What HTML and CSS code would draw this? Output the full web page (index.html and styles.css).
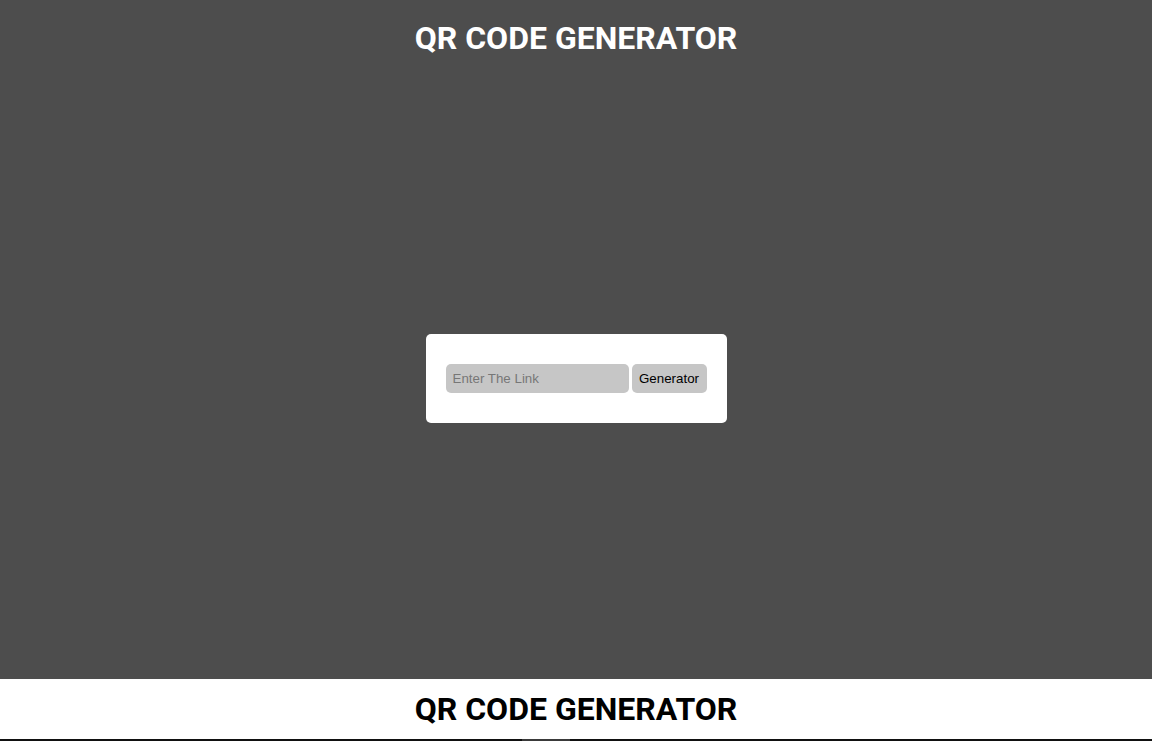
FILE: index.html
```html
<!DOCTYPE html>
<html>
<head>
<meta charset="utf-8">
<link rel="stylesheet" href="styles.css">
</head>
<body>
<main class="hero">
  <h1 class="title">QR CODE GENERATOR</h1>
  <div class="center">
    <div class="card">
      <input class="link-input" type="text" placeholder="Enter The Link">
      <button class="gen-btn">Generator</button>
    </div>
  </div>
</main>
<footer class="footer">
  <h2 class="footer-title">QR CODE GENERATOR</h2>
</footer>
<div class="bottom-bar"><span class="bar-thumb"></span></div>
</body>
</html>
```

FILE: styles.css
```css
* { box-sizing: border-box; }
html, body { margin: 0; padding: 0; }
body {
  background: #fff;
  font-family: Roboto, "Liberation Sans", sans-serif;
  overflow: hidden;
}
.hero {
  background: #4d4d4d;
  height: 679px;
  display: flex;
  flex-direction: column;
  align-items: center;
}
.title {
  margin: 0;
  padding-top: 18px;
  color: #fff;
  font-family: Roboto, sans-serif;
  font-weight: 700;
  font-size: 32px;
  line-height: 40px;
}
.center {
  flex: 1;
  display: flex;
  align-items: flex-start;
  justify-content: center;
  padding-top: 276px;
}
.card {
  background: #fff;
  width: 301px;
  height: 89px;
  border-radius: 5px;
  padding: 30px 20px;
  display: flex;
  gap: 3px;
  align-items: flex-start;
}
.link-input {
  width: 183px;
  height: 29px;
  border: none;
  border-radius: 5px;
  background: #c6c6c6;
  padding: 0 7px;
  font-family: "Liberation Sans", Arial, sans-serif;
  font-size: 13.333px;
  color: #333;
  outline: none;
}
.link-input::placeholder { color: #777; }
.gen-btn {
  width: 75px;
  height: 29px;
  border: none;
  border-radius: 5px;
  background: #c6c6c6;
  font-family: "Liberation Sans", Arial, sans-serif;
  font-size: 13.333px;
  color: #000;
  padding: 0;
}
.footer {
  height: 60px;
  display: flex;
  align-items: center;
  justify-content: center;
}
.footer-title {
  margin: 0;
  color: #000;
  font-family: Roboto, sans-serif;
  font-weight: 700;
  font-size: 32px;
  line-height: 40px;
}
.bottom-bar {
  height: 2px;
  background: #111;
  position: relative;
}
.bar-thumb {
  position: absolute;
  left: 522px;
  width: 48px;
  top: 0;
  height: 2px;
  background: #3a3a3a;
}
```
